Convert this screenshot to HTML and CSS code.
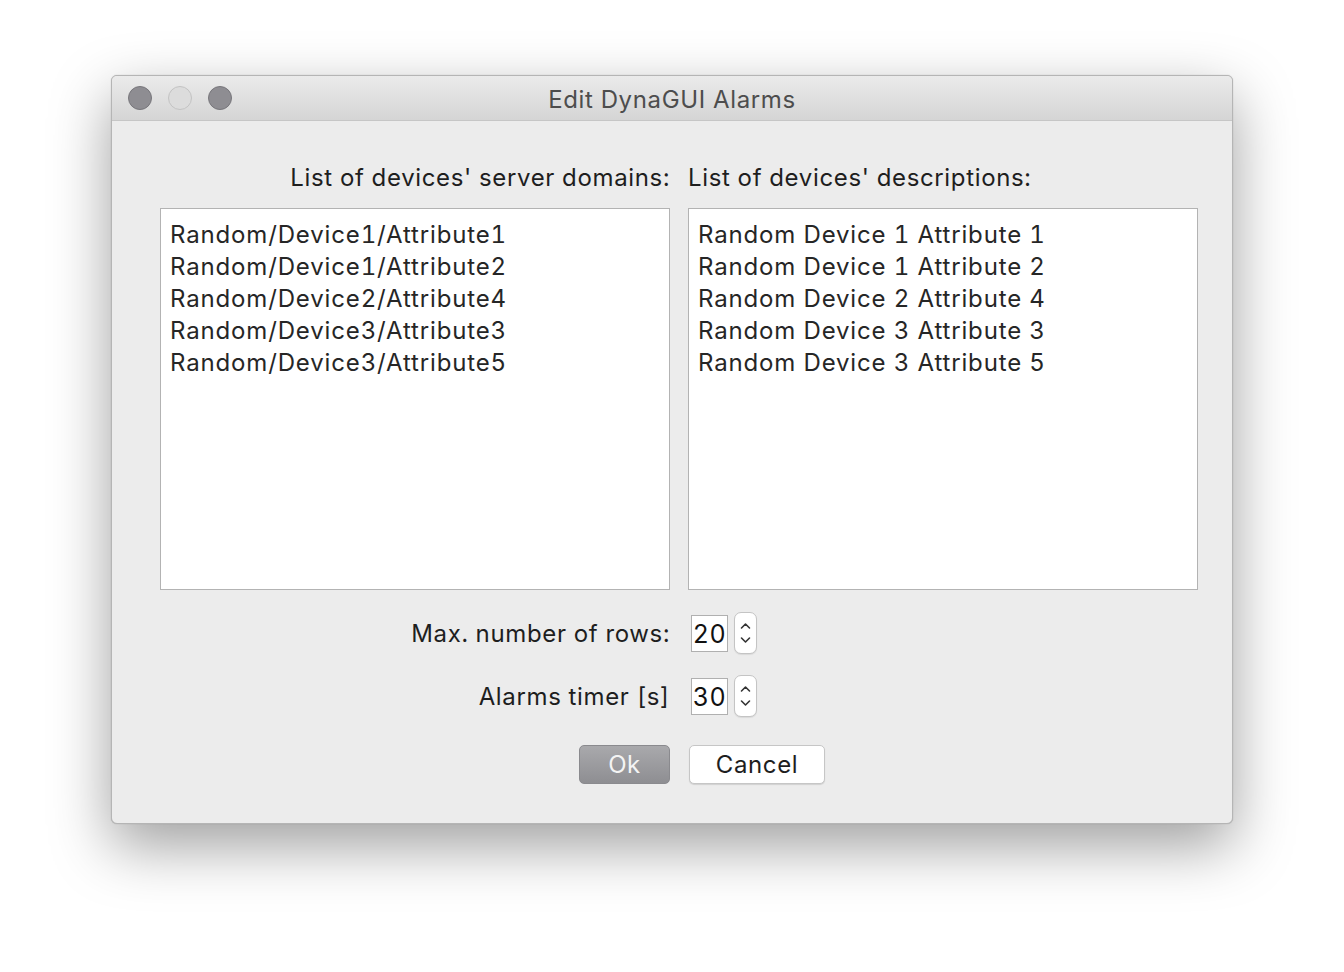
FILE: index.html
```html
<!DOCTYPE html>
<html>
<head>
<meta charset="utf-8">
<link rel="stylesheet" href="styles.css">
</head>
<body>
<div class="window">
  <div class="titlebar">
    <div class="lights">
      <span class="light dark"></span>
      <span class="light pale"></span>
      <span class="light dark"></span>
    </div>
    <div class="title">Edit DynaGUI Alarms</div>
  </div>
  <div class="content">
    <div class="label right">List of devices' server domains:</div>
    <div class="label">List of devices' descriptions:</div>
    <div class="list">
      <div>Random/Device1/Attribute1</div>
      <div>Random/Device1/Attribute2</div>
      <div>Random/Device2/Attribute4</div>
      <div>Random/Device3/Attribute3</div>
      <div>Random/Device3/Attribute5</div>
    </div>
    <div class="list">
      <div>Random Device 1 Attribute 1</div>
      <div>Random Device 1 Attribute 2</div>
      <div>Random Device 2 Attribute 4</div>
      <div>Random Device 3 Attribute 3</div>
      <div>Random Device 3 Attribute 5</div>
    </div>
    <div class="spinlabel right first">Max. number of rows:</div>
    <div class="spin first">
      <div class="field">20</div>
      <div class="arrows">
        <svg width="23" height="42" viewBox="0 0 23 42"><path d="M7.5 16 L11.5 12 L15.5 16" fill="none" stroke="#333" stroke-width="1.6" stroke-linecap="round" stroke-linejoin="round"/><path d="M7.5 26 L11.5 30 L15.5 26" fill="none" stroke="#333" stroke-width="1.6" stroke-linecap="round" stroke-linejoin="round"/></svg>
      </div>
    </div>
    <div class="spinlabel right">Alarms timer [s]</div>
    <div class="spin">
      <div class="field">30</div>
      <div class="arrows">
        <svg width="23" height="42" viewBox="0 0 23 42"><path d="M7.5 16 L11.5 12 L15.5 16" fill="none" stroke="#333" stroke-width="1.6" stroke-linecap="round" stroke-linejoin="round"/><path d="M7.5 26 L11.5 30 L15.5 26" fill="none" stroke="#333" stroke-width="1.6" stroke-linecap="round" stroke-linejoin="round"/></svg>
      </div>
    </div>
    <div class="btncell right"><button class="btn ok">Ok</button></div>
    <div class="btncell"><button class="btn cancel">Cancel</button></div>
  </div>
</div>
</body>
</html>
```
FILE: styles.css
```css
html, body {
  margin: 0;
  padding: 0;
  background: #ffffff;
  font-family: "Inter", "Liberation Sans", sans-serif;
  font-variant-numeric: tabular-nums;
  letter-spacing: 0.65px;
}
body {
  padding: 75px 0 0 111px;
  height: 972px;
  box-sizing: border-box;
}
.window {
  width: 1122px;
  height: 749px;
  background: #ececec;
  border-radius: 6px;
  border: 1px solid #b5b5b5;
  box-sizing: border-box;
  box-shadow: 0 22px 60px rgba(0,0,0,0.38), 0 0 1px rgba(0,0,0,0.3);
  overflow: hidden;
}
.titlebar {
  height: 45px;
  background: linear-gradient(#ebebeb, #d5d5d5);
  border-bottom: 1px solid #c6c6c6;
  box-sizing: border-box;
  display: flex;
  align-items: center;
  position: relative;
}
.lights {
  display: flex;
  gap: 16px;
  padding-left: 16px;
}
.light {
  width: 24px;
  height: 24px;
  border-radius: 50%;
  box-sizing: border-box;
}
.light.dark {
  background: #8e8d92;
  border: 1px solid #77767b;
}
.light.pale {
  background: #dcdcdc;
  border: 1px solid #c3c3c3;
}
.title {
  position: absolute;
  left: 0;
  right: 0;
  text-align: center;
  font-size: 24px;
  color: #4d4d4d;
  pointer-events: none;
  top: 9px;
}
.content {
  display: grid;
  grid-template-columns: 510px 510px;
  column-gap: 18px;
  padding: 41px 0 0 48px;
  color: #1e1e1e;
  font-size: 24px;
}
.label {
  line-height: 30px;
  height: 30px;
  padding-top: 1px;
}
.right {
  text-align: right;
  justify-self: end;
}
.list {
  margin-top: 15px;
  height: 382px;
  background: #ffffff;
  border: 1px solid #b3b3b3;
  box-sizing: border-box;
  padding: 10px 9px 9px;
  line-height: 32px;
  color: #262626;
  letter-spacing: 0.85px;
}
.spinlabel {
  margin-top: 19px;
  line-height: 46px;
  height: 44px;
}
.spinlabel.first {
  margin-top: 21px;
}
.spin {
  display: flex;
  align-items: center;
  gap: 6px;
  margin-top: 19px;
  margin-left: 3px;
  height: 44px;
}
.spin.first {
  margin-top: 21px;
}
.field {
  width: 37px;
  height: 37px;
  background: #fff;
  border: 1px solid #b0b0b0;
  box-sizing: border-box;
  font-size: 25px;
  line-height: 36px;
  text-align: center;
  color: #111;
  letter-spacing: 0.5px;
}
.arrows {
  width: 23px;
  height: 42px;
  background: #fff;
  border: 1px solid #c4c4c4;
  border-radius: 7px;
  box-sizing: border-box;
  display: flex;
  align-items: center;
  justify-content: center;
  box-shadow: 0 1px 1px rgba(0,0,0,0.08);
}
.arrows svg {
  display: block;
  flex: none;
}
.btncell {
  margin-top: 27px;
}
.btn {
  font-family: inherit;
  font-size: 24px;
  letter-spacing: 0.6px;
  height: 39px;
  border-radius: 5px;
  box-sizing: border-box;
  padding: 0;
  display: block;
}
.ok {
  width: 91px;
  background: linear-gradient(#a9a9ac, #8e8e92);
  border: 1px solid #8a8a8e;
  color: #f4f4f4;
}
.cancel {
  width: 136px;
  margin-left: 1px;
  background: #ffffff;
  border: 1px solid #c6c6c6;
  color: #1e1e1e;
  box-shadow: 0 1px 1px rgba(0,0,0,0.12);
}
```
